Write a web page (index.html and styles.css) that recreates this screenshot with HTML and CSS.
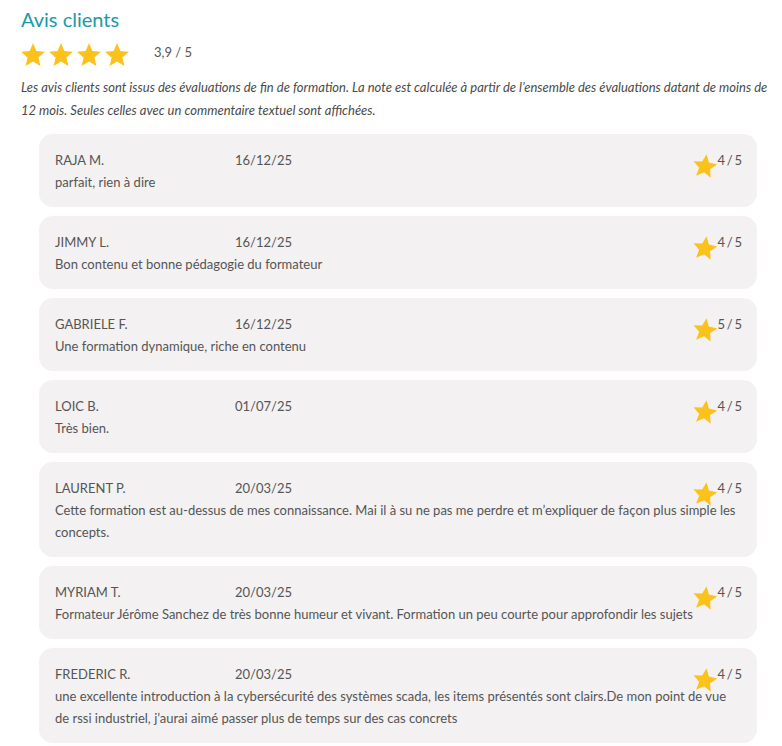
FILE: index.html
```html
<!DOCTYPE html>
<html lang="fr">
<head>
<meta charset="utf-8">
<title>Avis clients</title>
<link rel="stylesheet" href="styles.css">
</head>
<body>
<div class="page">
  <h2 class="title">Avis clients</h2>
  <div class="summary">
    <div class="stars">
      <svg class="star" viewBox="2 2 20 19"><path d="M12 17.27L18.18 21l-1.64-7.03L22 9.24l-7.19-.61L12 2 9.19 8.63 2 9.24l5.46 4.73L5.82 21z"/></svg>
      <svg class="star" viewBox="2 2 20 19"><path d="M12 17.27L18.18 21l-1.64-7.03L22 9.24l-7.19-.61L12 2 9.19 8.63 2 9.24l5.46 4.73L5.82 21z"/></svg>
      <svg class="star" viewBox="2 2 20 19"><path d="M12 17.27L18.18 21l-1.64-7.03L22 9.24l-7.19-.61L12 2 9.19 8.63 2 9.24l5.46 4.73L5.82 21z"/></svg>
      <svg class="star" viewBox="2 2 20 19"><path d="M12 17.27L18.18 21l-1.64-7.03L22 9.24l-7.19-.61L12 2 9.19 8.63 2 9.24l5.46 4.73L5.82 21z"/></svg>
    </div>
    <span class="score">3,9 / 5</span>
  </div>
  <p class="intro">Les avis clients sont issus des évaluations de fin de formation. La note est calculée à partir de l’ensemble des évaluations datant de moins de 12 mois. Seules celles avec un commentaire textuel sont affichées.</p>

  <div class="reviews">
    <div class="card">
      <div class="head"><span class="name">RAJA M.</span><span class="date">16/12/25</span><span class="rating"><svg class="rstar" viewBox="2 2 20 19"><path d="M12 17.27L18.18 21l-1.64-7.03L22 9.24l-7.19-.61L12 2 9.19 8.63 2 9.24l5.46 4.73L5.82 21z"/></svg>4 / 5</span></div>
      <p class="comment">parfait, rien à dire</p>
    </div>
    <div class="card">
      <div class="head"><span class="name">JIMMY L.</span><span class="date">16/12/25</span><span class="rating"><svg class="rstar" viewBox="2 2 20 19"><path d="M12 17.27L18.18 21l-1.64-7.03L22 9.24l-7.19-.61L12 2 9.19 8.63 2 9.24l5.46 4.73L5.82 21z"/></svg>4 / 5</span></div>
      <p class="comment">Bon contenu et bonne pédagogie du formateur</p>
    </div>
    <div class="card">
      <div class="head"><span class="name">GABRIELE F.</span><span class="date">16/12/25</span><span class="rating"><svg class="rstar" viewBox="2 2 20 19"><path d="M12 17.27L18.18 21l-1.64-7.03L22 9.24l-7.19-.61L12 2 9.19 8.63 2 9.24l5.46 4.73L5.82 21z"/></svg>5 / 5</span></div>
      <p class="comment">Une formation dynamique, riche en contenu</p>
    </div>
    <div class="card">
      <div class="head"><span class="name">LOIC B.</span><span class="date">01/07/25</span><span class="rating"><svg class="rstar" viewBox="2 2 20 19"><path d="M12 17.27L18.18 21l-1.64-7.03L22 9.24l-7.19-.61L12 2 9.19 8.63 2 9.24l5.46 4.73L5.82 21z"/></svg>4 / 5</span></div>
      <p class="comment">Très bien.</p>
    </div>
    <div class="card">
      <div class="head"><span class="name">LAURENT P.</span><span class="date">20/03/25</span><span class="rating"><svg class="rstar" viewBox="2 2 20 19"><path d="M12 17.27L18.18 21l-1.64-7.03L22 9.24l-7.19-.61L12 2 9.19 8.63 2 9.24l5.46 4.73L5.82 21z"/></svg>4 / 5</span></div>
      <p class="comment">Cette formation est au-dessus de mes connaissance. Mai il à su ne pas me perdre et m’expliquer de façon plus simple les concepts.</p>
    </div>
    <div class="card">
      <div class="head"><span class="name">MYRIAM T.</span><span class="date">20/03/25</span><span class="rating"><svg class="rstar" viewBox="2 2 20 19"><path d="M12 17.27L18.18 21l-1.64-7.03L22 9.24l-7.19-.61L12 2 9.19 8.63 2 9.24l5.46 4.73L5.82 21z"/></svg>4 / 5</span></div>
      <p class="comment">Formateur Jérôme Sanchez de très bonne humeur et vivant. Formation un peu courte pour approfondir les sujets</p>
    </div>
    <div class="card">
      <div class="head"><span class="name">FREDERIC R.</span><span class="date">20/03/25</span><span class="rating"><svg class="rstar" viewBox="2 2 20 19"><path d="M12 17.27L18.18 21l-1.64-7.03L22 9.24l-7.19-.61L12 2 9.19 8.63 2 9.24l5.46 4.73L5.82 21z"/></svg>4 / 5</span></div>
      <p class="comment">une excellente introduction à la cybersécurité des systèmes scada, les items présentés sont clairs.De mon point de vue de rssi industriel, j’aurai aimé passer plus de temps sur des cas concrets</p>
    </div>
  </div>
</div>
</body>
</html>
```

FILE: styles.css
```css
html, body {
  margin: 0;
  padding: 0;
  background: #ffffff;
}

body {
  font-family: Lato, "Open Sans", sans-serif;
  color: #555555;
}

.page {
  padding: 7px 8px 0 21px;
}

.title {
  margin: 0;
  font-size: 20px;
  line-height: 24px;
  font-weight: 400;
  color: #1a9aa8;
}

.summary {
  display: flex;
  align-items: flex-start;
  margin-top: 12px;
}

.stars {
  display: flex;
  gap: 4px;
}

.star {
  width: 24px;
  height: 23px;
  fill: #fcc21b;
  display: block;
}

.score {
  margin-left: 25px;
  font-size: 13px;
  line-height: 16px;
  margin-top: 1px;
  color: #555555;
}

.intro {
  margin: 10px 0 0;
  font-style: italic;
  font-size: 13px;
  line-height: 23px;
  color: #4a4a4a;
}

.reviews {
  display: flex;
  flex-direction: column;
  gap: 9px;
  margin: 12px 17px 0 18px;
}

.card {
  background: #f3f1f1;
  border-radius: 14px;
  padding: 15px 15px 14px 16px;
  font-size: 13px;
  line-height: 22px;
}

.head {
  display: flex;
  align-items: flex-start;
  height: 22px;
}

.name {
  width: 180px;
  flex-shrink: 0;
}

.date {
  flex: 1;
}

.rating {
  display: flex;
  align-items: flex-start;
  word-spacing: -1.5px;
}

.rstar {
  width: 24px;
  height: 23px;
  fill: #fcc21b;
  margin-top: 5px;
  transform: rotate(8deg);
}

.comment {
  margin: 0;
}
```
